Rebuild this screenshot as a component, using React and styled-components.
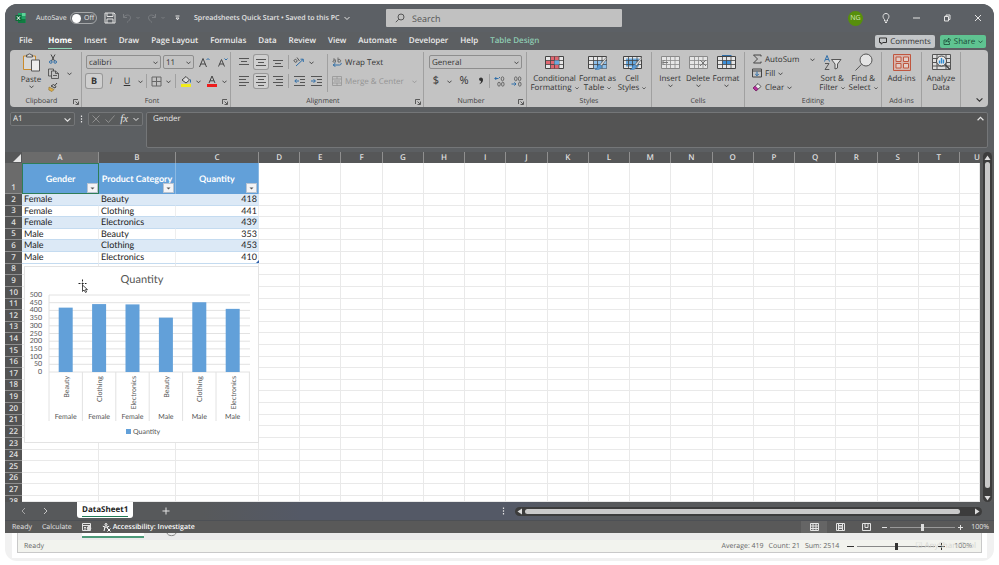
import React, { useState } from 'react'
import styled, { createGlobalStyle, css } from 'styled-components'

const GlobalStyle = createGlobalStyle`
  * { box-sizing: border-box; }
  body {
    margin: 0;
    background: #fff;
    font-family: 'Open Sans', 'Noto Sans', sans-serif;
    font-size: 8px;
    color: #333;
    text-rendering: geometricPrecision;
  }
  button, input, select, textarea {
    font: inherit;
    color: inherit;
    text-rendering: inherit;
    margin: 0;
    padding: 0;
    border: 0;
    background: none;
    outline: none;
  }
  button { white-space: nowrap; }
  svg { display: block; flex: none; }
`

/* ---------- frame ---------- */

const Page = styled.div`
  height: 100vh;
  padding: 4px 5px;
  overflow: hidden;
`

const Backdrop = styled.div`
  height: 100%;
  display: flex;
  flex-direction: column;
  background: #f1f1f1;
  border-radius: 12px;
`

const Window = styled.main`
  flex: 1;
  min-height: 0;
  display: flex;
  flex-direction: column;
  background: #5c5f62;
  border-radius: 12px 12px 0 0;
  overflow: hidden;
  color: #e4e4e4;
`

/* ---------- title bar ---------- */

const TitleBar = styled.header`
  height: 28px;
  flex: none;
  display: flex;
  align-items: center;
  background: #5c6065;
  padding: 0 10px;
`

const TitleLeft = styled.div`
  width: 371px;
  display: flex;
  align-items: center;
`

const AutoSave = styled.label`
  width: 71px;
  display: flex;
  align-items: center;
  justify-content: space-between;
  padding-left: 10px;
  margin-right: 7px;
  font-size: 7px;
`

const Toggle = styled.span`
  width: 27px;
  height: 12px;
  display: flex;
  align-items: center;
  gap: 3px;
  padding-left: 1px;
  border: 1px solid #a5a7a9;
  border-radius: 6px;
  input {
    appearance: none;
    width: 9px;
    height: 9px;
    border-radius: 50%;
    background: #fff;
  }
`

const QuickAccess = styled.div`
  display: flex;
  align-items: center;
  gap: 4px;
  width: 78px;
  margin-right: 12px;
  button:last-child { margin-left: 5px; }
`

const DocTitle = styled.button`
  display: flex;
  align-items: center;
  gap: 5px;
  font-size: 7px;
  font-weight: 600;
`

const SearchBox = styled.label`
  width: 236px;
  height: 18px;
  display: flex;
  align-items: center;
  gap: 7px;
  padding-left: 9px;
  background: #c1c1c1;
  border-radius: 1px;
  color: #555;
  font-size: 9px;
  input { flex: 1; min-width: 0; }
  input::placeholder { color: #555; opacity: 1; }
`

const TitleRight = styled.div`
  margin-left: auto;
  display: flex;
  align-items: center;
  gap: 20px;
  > :first-child { margin-right: -3px; }
`

const Avatar = styled.span`
  width: 15px;
  height: 15px;
  border-radius: 50%;
  background: #578f0c;
  color: #d5e6bd;
  font-size: 7px;
  line-height: 15px;
  text-align: center;
`

/* ---------- ribbon tabs ---------- */

const TabBar = styled.nav`
  height: 18px;
  flex: none;
  display: flex;
  align-items: center;
  padding: 0 8px 0 14px;
  gap: 12px;
  font-size: 8px;
`

const Tab = styled.button`
  height: 15px;
  align-self: flex-end;
  margin-bottom: 1px;
  line-height: 14px;
  border-bottom: 1px solid transparent;
  color: ${p => (p.$accent ? '#8fcdb4' : '#ececec')};
  font-weight: ${p => (p.$active ? 700 : 600)};
  ${p => p.$active && css`
    border-color: #8fd6b6;
    color: #fff;
  `}
  ${p => p.$first && css`margin-right: 4px;`}
`

const TabAction = styled.button`
  height: 13px;
  display: flex;
  align-items: center;
  justify-content: center;
  gap: 3px;
  border-radius: 2px;
  background: ${p => (p.$green ? '#5fc391' : '#c3c6c8')};
  color: ${p => (p.$green ? '#1c4a35' : '#333')};
  width: ${p => (p.$green ? 46 : 60)}px;
`

const TabActions = styled.div`
  margin-left: auto;
  display: flex;
  gap: 5px;
`

/* ---------- ribbon ---------- */

const Ribbon = styled.section`
  height: 57px;
  flex: none;
  display: flex;
  margin: 0 6px 0 5px;
  background: #c3c3c3;
  border-radius: 4px;
  color: #333;
  padding: 2px 0 0;
`

const Group = styled.div`
  width: ${p => p.$w}px;
  flex: none;
  display: flex;
  flex-direction: column;
  border-right: 1px solid #a0a0a0;
`

const GroupBody = styled.div`
  flex: 1;
  min-height: 0;
  display: flex;
  justify-content: ${p => p.$justify || 'flex-start'};
  gap: ${p => p.$gap || 0}px;
  padding: 0 ${p => p.$pad || 0}px;
`

const GroupLabel = styled.div`
  height: 11px;
  line-height: 10px;
  display: flex;
  align-items: center;
  justify-content: center;
  font-size: 7px;
  color: #3f3f3f;
  span { flex: 1; text-align: center; }
  svg { margin-right: 2px; }
`

const Stack = styled.div`
  display: flex;
  flex-direction: column;
  gap: 3px;
  padding-top: 2px;
  flex: none;
`

const Row = styled.div`
  height: 16px;
  display: flex;
  align-items: center;
  gap: ${p => p.$gap || 4}px;
`

const Tool = styled.button`
  min-width: ${p => p.$w || 14}px;
  height: 14px;
  display: flex;
  align-items: center;
  justify-content: center;
  gap: ${p => p.$gap || 4}px;
  border-radius: 2px;
  color: ${p => (p.$dim ? '#949494' : '#333')};
  ${p => p.$on && css`
    background: #cfcfcf;
    box-shadow: 0 0 0 1px #989898;
  `}
`

const Glyph = styled.span`
  font-size: ${p => p.$size || 9}px;
  line-height: 12px;
  font-weight: ${p => (p.$bold ? 700 : 400)};
  font-style: ${p => (p.$italic ? 'italic' : 'normal')};
  text-decoration: ${p => (p.$underline ? 'underline' : 'none')};
`

const Divider = styled.i`
  width: 1px;
  height: 14px;
  background: #a0a0a0;
`

const TallDivider = styled.i`
  width: 1px;
  height: 38px;
  margin-top: 2px;
  background: #a0a0a0;
`

const SelectWrap = styled.div`
  position: relative;
  width: ${p => p.$w}px;
  height: 14px;
  select {
    appearance: none;
    width: 100%;
    height: 14px;
    padding-left: 2px;
    border: 1px solid #8e8e8e;
    border-radius: 2px;
    color: #333;
  }
  svg {
    position: absolute;
    right: 3px;
    top: 5px;
    pointer-events: none;
  }
`

const BigTool = styled.button`
  display: flex;
  flex-direction: column;
  align-items: center;
  width: ${p => p.$w}px;
  padding-top: ${p => (p.$tall ? 1 : 3)}px;
  color: #333;
  line-height: 9px;
  > svg:first-child { margin: 0 0 ${p => (p.$tall ? 3 : 4)}px; }
`

const MenuLine = styled.span`
  height: 9px;
  display: flex;
  align-items: center;
  gap: 3px;
`

const SmallStack = styled.div`
  display: flex;
  flex-direction: column;
  button {
    height: 14px;
    display: flex;
    align-items: center;
    gap: 3px;
    color: #333;
  }
`

const Gap = styled.span`
  width: ${p => p.$w}px;
`

const Collapse = styled.button`
  margin: auto 5px 4px auto;
  color: #333;
`

/* ---------- formula bar ---------- */

const FormulaBar = styled.section`
  height: 45px;
  flex: none;
  display: flex;
  align-items: flex-start;
  padding: 5px 6px 4px 5px;
`

const Box = styled.div`
  height: ${p => (p.$tall ? '36px' : '14px')};
  display: flex;
  align-items: ${p => (p.$tall ? 'flex-start' : 'center')};
  background: ${p => (p.$tall ? '#545454' : '#595b5c')};
  border: 1px solid #747678;
  border-radius: 2px;
  color: #e6e6e6;
`

const NameBox = styled(Box)`
  width: 65px;
  padding: 0 3px 0 2px;
  input {
    flex: 1;
    min-width: 0;
    height: 12px;
    line-height: 12px;
  }
`

const FxBox = styled(Box)`
  width: 55px;
  justify-content: space-around;
  margin-right: 3px;
  em { font: italic 11px/12px 'Liberation Serif', serif; }
`

const Dots = styled.span`
  width: 13px;
  height: 14px;
  display: flex;
  align-items: center;
  justify-content: center;
`

const FormulaBox = styled(Box)`
  flex: 1;
  padding: 0 3px 0 6px;
  textarea {
    flex: 1;
    height: 30px;
    line-height: 12px;
    resize: none;
    overflow: hidden;
  }
  svg { margin-top: 2px; }
`

/* ---------- sheet ---------- */

const SheetArea = styled.section`
  flex: 1;
  min-height: 0;
  display: flex;
`

const SheetView = styled.div`
  position: relative;
  flex: 1;
  min-width: 0;
`

const Grid = styled.table`
  display: grid;
  height: 100%;
  grid-template-columns: 17px 77px 77px 83px repeat(17, minmax(0, 1fr)) 20px;
  grid-template-rows: 11px 31px repeat(26, minmax(0, 1fr)) 6px;
  background: #fff;
  font-family: Lato, sans-serif;
  font-size: 9px;
  color: #222;
  thead, tbody, tr { display: contents; }
`

const ColHead = styled.th`
  padding: 0;
  background: ${p => (p.$active ? '#6b6b6b' : '#565758')};
  border-right: 1px solid #8f8f8f;
  color: #dedede;
  font: 600 8px/11px 'Open Sans', sans-serif;
  text-align: center;
  overflow: hidden;
  &:last-child {
    border: 0;
    text-align: right;
  }
`

const RowHead = styled.th`
  padding: 0;
  display: flex;
  align-items: flex-end;
  justify-content: center;
  overflow: hidden;
  background: ${p => (p.$active ? '#6b6b6b' : '#535353')};
  border-bottom: 1px solid #8f8f8f;
  color: #dedede;
  font: 600 8px/11px 'Open Sans', sans-serif;
  ${p => p.$cut && css`
    align-items: flex-start;
    border: 0;
  `}
`

const Corner = styled.th`
  padding: 0 1px 1px 0;
  display: flex;
  align-items: flex-end;
  justify-content: flex-end;
  background: #565758;
`

const Cell = styled.td`
  padding: 0 2px;
  overflow: hidden;
  white-space: nowrap;
  line-height: 10px;
  text-align: ${p => (p.$num ? 'right' : 'left')};
  border-right: 1px solid #e9e9e9;
  border-bottom: 1px solid #e9e9e9;
  ${p => p.$num && css`padding-right: 1px;`}
  ${p => p.$table && css`
    background: ${p.$band ? '#dce9f6' : '#fff'};
    border-bottom-color: #c4dbf0;
    border-right-color: ${p.$band ? '#dce9f6' : '#eee'};
  `}
`

const HeadCell = styled.td`
  position: relative;
  padding: 0;
  display: flex;
  align-items: center;
  justify-content: center;
  background: #62a0d9;
  color: #fff;
  font-weight: 700;
  white-space: nowrap;
  border-right: 1px solid #8bb9e3;
  ${p => p.$active && css`
    border: 0;
    box-shadow: inset 0 0 0 1px #2e7d57;
  `}
  button {
    position: absolute;
    right: 1px;
    bottom: 1px;
    width: 11px;
    height: 10px;
    display: flex;
    align-items: center;
    justify-content: center;
    background: #f4f4f6;
    border: 1px solid #b9c4d2;
    color: #555;
  }
`

const TableCorner = styled.span`
  position: absolute;
  left: 251px;
  top: 108px;
  color: #2f5fa8;
`

const ChartBox = styled.figure`
  position: absolute;
  left: 19px;
  top: 114px;
  width: 235px;
  height: 177px;
  margin: 0;
  background: #fff;
  border: 1px solid #e3e3e3;
  svg text { font-family: Lato, sans-serif; fill: #555; }
`

const Pointer = styled.span`
  position: absolute;
  left: 73px;
  top: 127px;
`

const VScroll = styled.div`
  width: 14px;
  display: flex;
  flex-direction: column;
  align-items: center;
  margin-left: auto;
  background: #5a5b5c;
`

const VTrack = styled.div`
  width: 9px;
  flex: 1;
  display: flex;
  flex-direction: column;
  align-items: center;
  gap: 2px;
  padding: 3px 0 1px;
  background: #3c3c3c;
  border-radius: 5px;
  i {
    flex: 1;
    width: 5px;
    margin-bottom: 6px;
    background: #c9c9c9;
    border-radius: 3px;
  }
`

/* ---------- bottom bars ---------- */

const SheetTabs = styled.nav`
  height: 18px;
  flex: none;
  display: flex;
  align-items: center;
  padding: 0 12px 0 15px;
  background: linear-gradient(90deg, #57595b 20%, #545966 30%, #545966 52%, #57595b 60%);
`

const Arrows = styled.div`
  width: 57px;
  display: flex;
  gap: 13px;
`

const SheetTab = styled.button`
  height: 16px;
  align-self: flex-start;
  padding: 0 5px 1px;
  background: #fff;
  border-radius: 0 0 3px 3px;
  color: #222;
  font-size: 8px;
  font-weight: 700;
  line-height: 13px;
  span {
    display: block;
    height: 14px;
    border-bottom: 1px solid #217a56;
  }
`

const AddSheet = styled.button`
  margin-left: 29px;
`

const HScroll = styled.div`
  width: 467px;
  height: 9px;
  margin-left: 10px;
  display: flex;
  align-items: center;
  gap: 3px;
  padding: 0 2px;
  background: #3c3c3c;
  border-radius: 5px;
  i {
    flex: 1;
    height: 5px;
    margin-right: 12px;
    background: #c9c9c9;
    border-radius: 3px;
  }
`

const Handle = styled.span`
  margin-left: auto;
`

const StatusBar = styled.footer`
  height: 13px;
  flex: none;
  display: flex;
  align-items: center;
  gap: 10px;
  padding: 0 5px 0 7px;
  background: #595959;
  border-top: 1px solid #4d5055;
  font-size: 7px;
`

const Accessibility = styled.button`
  display: flex;
  align-items: center;
  gap: 2px;
  font-weight: 600;
  color: #fff;
`

const StatusRight = styled.div`
  margin-left: auto;
  display: flex;
  align-items: center;
  gap: 8px;
`

const StatusViews = styled.div`
  display: flex;
  align-items: center;
  margin-right: -5px;
  button {
    width: 26px;
    height: 12px;
    display: flex;
    align-items: center;
    justify-content: center;
  }
  button:first-child { background: #656565; }
`

const ZoomGroup = styled.div`
  display: flex;
  align-items: center;
  gap: 3px;
`

const Slider = styled.input`
  appearance: none;
  width: ${p => (p.$light ? 78 : 65)}px;
  height: 8px;
  background: linear-gradient(${p => (p.$light ? '#888, #888' : '#999, #999')}) center / 100% 1px no-repeat;
  &::-webkit-slider-thumb {
    appearance: none;
    width: 3px;
    height: 7px;
    background: ${p => (p.$light ? '#333' : '#ddd')};
  }
`

/* ---------- window underneath ---------- */

const Under = styled.section`
  height: 20px;
  flex: none;
  margin: 0 12px 8px;
  background: #ebebeb;
  border: 1px solid #c9c9c9;
  border-top: 0;
  outline: 5px solid #fff;
  clip-path: inset(0 -5px -5px -5px);
`

const UnderTabs = styled.div`
  height: 7px;
  display: flex;
  align-items: flex-start;
  padding-left: 64px;
  i {
    width: 62px;
    height: 5px;
    background: #fff;
    border-bottom: 2px solid #4d9a7a;
  }
  svg { margin-left: 22px; }
`

const UnderStatus = styled.div`
  position: relative;
  height: 12px;
  display: flex;
  align-items: center;
  padding: 0 9px 0 6px;
  background: #f2f3ee;
  color: #666;
  font-size: 7px;
`

const Sums = styled.div`
  margin-left: auto;
  display: flex;
  gap: 5px;
  margin-right: 8px;
`

const Watermark = styled.span`
  position: absolute;
  right: 5px;
  top: 1px;
  line-height: 10px;
  font-size: 8px;
  color: #d6d7d3;
`

/* ---------- icons ---------- */

const Chevron = ({ size = 5, up }) => (
  <svg width={size} height={size} viewBox="0 0 6 6" fill="none" stroke="currentColor" strokeWidth="1">
    <path d={up ? 'M0.5 4.5L3 2L5.5 4.5' : 'M0.5 2L3 4.5L5.5 2'} />
  </svg>
)

const Icon = ({ w = 12, h = w, vw = w, vh = h, children }) => (
  <svg width={w} height={h} viewBox={`0 0 ${vw} ${vh}`} fill="none" stroke="currentColor" strokeWidth="1">
    {children}
  </svg>
)

const Launcher = () => (
  <Icon w={6}><path d="M0.5 5V0.5H5M2.5 2.5L5 5M5.5 2.5V5.5H2.5" strokeWidth="0.8" /></Icon>
)

const AlignIcon = ({ lines }) => (
  <Icon w={10}>
    {lines.map(([x1, x2, y]) => <path key={y} d={`M${x1} ${y}H${x2}`} stroke="#555" />)}
  </Icon>
)

const TableIcon = ({ w = 19, h = 15, fill, stroke = '#444', children }) => (
  <Icon w={w} h={h} vw={19} vh={15}>
    <path d="M0.5 1.5H18.5V13.5H0.5Z" fill="#e6e6e6" stroke={stroke} />
    {fill}
    <path d="M0.5 5.5H18.5M0.5 9.5H18.5M5.5 1.5V13.5M9.5 1.5V13.5M14 1.5V13.5" stroke={stroke} strokeWidth="0.8" />
    {children}
  </Icon>
)

const Brush = () => (
  <g>
    <path d="M18.5 2L12 9.5L13.5 11L18.8 4Z" fill="#d9d9d9" stroke="#555" strokeWidth="0.6" />
    <path d="M12 9.5C10 9.5 9.5 11 9 13.2C8.5 14.3 7.5 14.5 7 14.5C10 15.2 13.5 14 13.5 11Z" fill="#5b9bd5" stroke="#2f6ea8" strokeWidth="0.5" />
  </g>
)

const DotsIcon = () => (
  <Icon w={3} h={8}>
    <path d="M1.5 0.5V2M1.5 3.2V4.7M1.5 6V7.5" strokeWidth="1.2" />
  </Icon>
)

const MenuWord = ({ children }) => <MenuLine>{children}<Chevron size={4} /></MenuLine>

/* ---------- data ---------- */

const tabs = ['File', 'Home', 'Insert', 'Draw', 'Page Layout', 'Formulas', 'Data', 'Review', 'View', 'Automate', 'Developer', 'Help', 'Table Design']
const columns = 'ABCDEFGHIJKLMNOPQRSTU'.split('')
const headers = ['Gender', 'Product Category', 'Quantity']
const records = [
  ['Female', 'Beauty', 418],
  ['Female', 'Clothing', 441],
  ['Female', 'Electronics', 439],
  ['Male', 'Beauty', 353],
  ['Male', 'Clothing', 453],
  ['Male', 'Electronics', 410],
]
const rowNumbers = Array.from({ length: 27 }, (_, i) => i + 2)

/* ---------- sections ---------- */

function Title() {
  return (
    <TitleBar>
      <TitleLeft>
        <Icon w={11} h={12}>
          <path d="M3 1H10.5V11H3Z" fill="#21a366" stroke="none" />
          <path d="M7 1H10.5V4H7Z" fill="#5fd39a" stroke="none" />
          <path d="M3 7H10.5V11H3Z" fill="#107c41" stroke="none" />
          <path d="M0.5 3H6.5V9H0.5Z" fill="#0d6a38" stroke="none" />
          <path d="M2 4.3L5 7.8M5 4.3L2 7.8" stroke="#fff" />
        </Icon>
        <AutoSave>
          AutoSave
          <Toggle><input type="checkbox" aria-label="AutoSave" />Off</Toggle>
        </AutoSave>
        <QuickAccess>
          <button aria-label="Save">
            <Icon w={12}><path d="M1 1H10L11 2V11H1ZM3 1V4.5H9V1M3 11V7H9V11" /></Icon>
          </button>
          <Tool $w={21} aria-label="Undo">
            <Icon w={10}><path d="M1.5 1V4.5H5M1.5 4.5C3 1.5 8 1 8.5 4.5C8.7 6.5 6.5 8 5 9.5" stroke="#7b7e82" /></Icon>
            <Icon w={4}><path d="M0.5 1L2 2.5L3.5 1" stroke="#7b7e82" /></Icon>
          </Tool>
          <Tool $w={21} aria-label="Redo">
            <Icon w={10}><path d="M8.5 1V4.5H5M8.5 4.5C7 1.5 2 1 1.5 4.5C1.3 6.5 3.5 8 5 9.5" stroke="#7b7e82" /></Icon>
            <Icon w={4}><path d="M0.5 1L2 2.5L3.5 1" stroke="#7b7e82" /></Icon>
          </Tool>
          <button aria-label="Customize toolbar">
            <Icon w={5} h={6}><path d="M0.5 1H4.5M1 3H4L2.5 4.8Z" /></Icon>
          </button>
        </QuickAccess>
        <DocTitle>Spreadsheets Quick Start • Saved to this PC <Chevron size={6} /></DocTitle>
      </TitleLeft>
      <SearchBox>
        <Icon w={10}><circle cx="6" cy="4" r="3" /><path d="M3.8 6.2L0.8 9.2" /></Icon>
        <input type="text" placeholder="Search" aria-label="Search" />
      </SearchBox>
      <TitleRight>
        <Avatar>NG</Avatar>
        <button aria-label="Tips">
          <Icon w={12}><path d="M4.5 7.5C2 5 3 1.5 6 1.5C9 1.5 10 5 7.5 7.5V9H4.5ZM5 10.5H7" /></Icon>
        </button>
        <button aria-label="Minimize"><Icon w={10}><path d="M1 5H8" /></Icon></button>
        <button aria-label="Restore">
          <Icon w={10}><path d="M2.5 3.5H6.5V8H2.5ZM4 3.5V2H8V6.5H6.5" /></Icon>
        </button>
        <button aria-label="Close"><Icon w={12}><path d="M3 3L9 9M9 3L3 9" /></Icon></button>
      </TitleRight>
    </TitleBar>
  )
}

function RibbonTabs() {
  const [active, setActive] = useState('Home')
  return (
    <TabBar>
      {tabs.map((name, i) => (
        <Tab key={name} $first={i === 0} $active={name === active} $accent={name === 'Table Design'} onClick={() => setActive(name)}>
          {name}
        </Tab>
      ))}
      <TabActions>
        <TabAction>
          <Icon w={8}><path d="M0.5 1H7.5V5.5H4L2 7.2V5.5H0.5Z" /></Icon>
          Comments
        </TabAction>
        <TabAction $green>
          <Icon w={8}><path d="M3 3H1V7.5H6.5V5.5M2.8 5.2C3 3.5 4 2.7 5.5 2.7V1L7.7 3.2L5.5 5.2V4C4.2 4 3.5 4.2 2.8 5.2Z" strokeWidth="0.8" /></Icon>
          Share
          <Chevron />
        </TabAction>
      </TabActions>
    </TabBar>
  )
}

function ClipboardGroup() {
  return (
    <Group $w={72}>
      <GroupBody $pad={8} $gap={4}>
        <BigTool $w={26} $tall>
          <Icon w={19} h={19}>
            <path d="M1.5 3H13.5V16.5H1.5Z" fill="#d8d8d8" stroke="#c98a2c" />
            <path d="M4.5 4V2H6C6 0.5 9 0.5 9 2H10.5V4Z" fill="#ddd" stroke="#555" />
            <path d="M9.5 7H17.5V18H9.5Z" fill="#ececec" stroke="#555" />
          </Icon>
          Paste
          <Chevron />
        </BigTool>
        <SmallStack>
          <button aria-label="Cut">
            <Icon w={10}><path d="M3 0.5L6.5 7M7 0.5L3.5 7" stroke="#444" /><circle cx="2.8" cy="8" r="1.3" stroke="#2f6ea8" /><circle cx="7.2" cy="8" r="1.3" stroke="#2f6ea8" /></Icon>
          </button>
          <button aria-label="Copy">
            <Icon w={11}><path d="M3.5 8H0.5V1H5.5V3M3.5 3H7.5L10.5 5.5V10.5H3.5ZM7.5 3V5.5H10.5M5 7.5H9" stroke="#444" strokeWidth="0.8" /></Icon>
            <Gap $w={2} />
            <Chevron />
          </button>
          <button aria-label="Format Painter">
            <Icon w={10}><path d="M1 5L6 7.5L4 9.5L0.8 8Z" fill="#e0b04a" stroke="#8a6d2a" strokeWidth="0.6" /><path d="M3 4L7 6L8 4.5L5.5 2.5ZM6.8 3.5L9 1" stroke="#444" /></Icon>
          </button>
        </SmallStack>
      </GroupBody>
      <GroupLabel><span>Clipboard</span><Launcher /></GroupLabel>
    </Group>
  )
}

function FontGroup() {
  return (
    <Group $w={149}>
      <GroupBody $pad={4}>
        <Stack>
          <Row $gap={2}>
            <SelectWrap $w={75}>
              <select aria-label="Font"><option>calibri</option></select>
              <Chevron />
            </SelectWrap>
            <SelectWrap $w={31}>
              <select aria-label="Font size"><option>11</option></select>
              <Chevron />
            </SelectWrap>
            <Tool $w={17} aria-label="Increase font size">
              <Icon w={11}><path d="M0.5 10L4 1.5L7.5 10M1.8 7H6.2" stroke="#444" /><path d="M7.5 3L9 1.5L10.5 3" stroke="#2f6ea8" /></Icon>
            </Tool>
            <Tool $w={16} aria-label="Decrease font size">
              <Icon w={10}><path d="M0.5 9.5L3.5 2.5L6.5 9.5M1.5 7H5.5" stroke="#444" /><path d="M6.5 1.5L8 3L9.5 1.5" stroke="#2f6ea8" /></Icon>
            </Tool>
          </Row>
          <Row $gap={2}>
            <Tool $on $w={16}><Glyph $bold>B</Glyph></Tool>
            <Tool><Glyph $italic>I</Glyph></Tool>
            <Tool><Glyph $underline>U</Glyph></Tool>
            <Tool $w={8} aria-label="Underline options"><Chevron /></Tool>
            <Divider />
            <Tool $w={24} aria-label="Borders">
              <Icon w={11}><path d="M1 1H10V10H1ZM5.5 1V10M1 5.5H10" stroke="#666" /></Icon>
              <Chevron />
            </Tool>
            <Divider />
            <Tool $w={24} aria-label="Fill color">
              <Icon w={12}><path d="M2 5L6 1.5L9.5 5L6 8Z" stroke="#444" fill="#ddd" /><path d="M10.5 4.5V7.5" stroke="#2f6ea8" /><path d="M1 10.5H11" stroke="#f3ec1a" strokeWidth="3" /></Icon>
              <Chevron />
            </Tool>
            <Tool $w={24} aria-label="Font color">
              <Icon w={12}><path d="M3 8L6 1L9 8M4 5.8H8" stroke="#444" /><path d="M1 10.5H11" stroke="#ee1c1c" strokeWidth="3" /></Icon>
              <Chevron />
            </Tool>
          </Row>
        </Stack>
      </GroupBody>
      <GroupLabel><span>Font</span><Launcher /></GroupLabel>
    </Group>
  )
}

function AlignmentGroup() {
  return (
    <Group $w={193}>
      <GroupBody $pad={6} $gap={4}>
        <Stack>
          <Row $gap={3}>
            <Tool><AlignIcon lines={[[0, 10, 1.5], [2, 8, 4.5], [0, 10, 7.5]]} /></Tool>
            <Tool $on><AlignIcon lines={[[0, 10, 2.5], [2, 8, 5.5], [0, 10, 8.5]]} /></Tool>
            <Tool><AlignIcon lines={[[0, 10, 3.5], [2, 8, 6.5], [0, 10, 9.5]]} /></Tool>
            <Divider />
            <Tool $w={22} aria-label="Orientation">
              <Icon w={12}><path d="M1 4.5C2 2.5 4 3.5 4 5S1.5 7 1 4.5M4 1.5L6.5 5" stroke="#555" /><path d="M3 10L10 3.5M7.5 3.2H10.3V6" stroke="#2f6ea8" /></Icon>
              <Chevron />
            </Tool>
          </Row>
          <Row $gap={3}>
            <Tool><AlignIcon lines={[[0, 10, 0.5], [0, 7, 3.5], [0, 10, 6.5], [0, 7, 9.5]]} /></Tool>
            <Tool $on><AlignIcon lines={[[0, 10, 0.5], [2, 8, 3.5], [0, 10, 6.5], [2, 8, 9.5]]} /></Tool>
            <Tool><AlignIcon lines={[[0, 10, 0.5], [3, 10, 3.5], [0, 10, 6.5], [3, 10, 9.5]]} /></Tool>
            <Divider />
            <Tool aria-label="Decrease indent">
              <Icon w={11} h={10}><path d="M0 0.5H11M6 3.5H11M6 6.5H11M0 9.5H11" stroke="#555" /><path d="M5 5H1M2.5 3.2L0.8 5L2.5 6.8" stroke="#2f6ea8" /></Icon>
            </Tool>
            <Tool aria-label="Increase indent">
              <Icon w={11} h={10}><path d="M0 0.5H11M6 3.5H11M6 6.5H11M0 9.5H11" stroke="#555" /><path d="M0 5H4.2M2.6 3.2L4.4 5L2.6 6.8" stroke="#2f6ea8" /></Icon>
            </Tool>
          </Row>
        </Stack>
        <TallDivider />
        <Stack>
          <Row>
            <Tool $gap={3}>
              <Icon w={10}><path d="M1 2.5C2.5 1 3.5 2.5 3.5 5C2 5.5 0.5 5 1 4C1.5 3 3.5 3.2 3.5 3.2M6 0.5V5C8 5.5 9 4.5 8.5 3.2C8 2 6.5 2.3 6 3" stroke="#555" strokeWidth="0.8" /><path d="M1 8H7.5C9.5 8 9.5 5.8 8.8 5.8M3.5 6L1.2 8L3.5 9.8" stroke="#2f6ea8" /></Icon>
              Wrap Text
            </Tool>
          </Row>
          <Row>
            <Tool $dim $gap={3}>
              <Icon w={10}><path d="M0.5 0.5H9.5V9.5H0.5ZM0.5 3H9.5M0.5 7H9.5M5 0.5V3M5 7V9.5M2 5H8" strokeWidth="0.8" /></Icon>
              Merge &amp; Center
              <Gap $w={2} />
              <Chevron />
            </Tool>
          </Row>
        </Stack>
      </GroupBody>
      <GroupLabel><span>Alignment</span><Launcher /></GroupLabel>
    </Group>
  )
}

function NumberGroup() {
  return (
    <Group $w={103}>
      <GroupBody $pad={5}>
        <Stack>
          <Row>
            <SelectWrap $w={93}>
              <select aria-label="Number format"><option>General</option></select>
              <Chevron />
            </SelectWrap>
          </Row>
          <Row $gap={1}>
            <Tool><Glyph $size={11}>$</Glyph></Tool>
            <Tool $w={10} aria-label="Currency options"><Chevron /></Tool>
            <Tool $w={18}><Glyph $size={11}>%</Glyph></Tool>
            <Tool $w={14} aria-label="Comma style">
              <Icon w={6} h={8}><path d="M3 0.5C0.5 0.5 0.5 4 3 4C3 5.5 2.3 6.3 1.2 7.2C4 6.5 5.2 4.5 5 2.5C4.9 1.2 4 0.5 3 0.5Z" fill="#333" stroke="none" /></Icon>
            </Tool>
            <Divider />
            <Tool $w={16} aria-label="Increase decimal">
              <Icon w={11}><path d="M6 1.5H5M1 2.5H4.5M2.3 1L0.8 2.5L2.3 4" stroke="#2f6ea8" /><ellipse cx="8.5" cy="2.8" rx="1.3" ry="2" stroke="#555" strokeWidth="0.8" /><ellipse cx="5" cy="8.2" rx="1.3" ry="2" stroke="#555" strokeWidth="0.8" /><ellipse cx="8.8" cy="8.2" rx="1.3" ry="2" stroke="#555" strokeWidth="0.8" /></Icon>
            </Tool>
            <Tool $w={16} aria-label="Decrease decimal">
              <Icon w={11}><ellipse cx="4.8" cy="2.8" rx="1.3" ry="2" stroke="#555" strokeWidth="0.8" /><ellipse cx="8.6" cy="2.8" rx="1.3" ry="2" stroke="#555" strokeWidth="0.8" /><ellipse cx="8.8" cy="8.2" rx="1.3" ry="2" stroke="#555" strokeWidth="0.8" /><path d="M0.5 8H5M3.4 6.4L5 8L3.4 9.6" stroke="#2f6ea8" /></Icon>
            </Tool>
          </Row>
        </Stack>
      </GroupBody>
      <GroupLabel><span>Number</span><Launcher /></GroupLabel>
    </Group>
  )
}

function RestGroups() {
  return (
    <>
      <Group $w={125}>
        <GroupBody $pad={4} $gap={1}>
          <BigTool $w={47}>
            <TableIcon fill={<path d="M5.5 1.5H14V5.5H5.5ZM1 5.5H9.5V9.5H1ZM5.5 9.5H14V13.5H5.5Z" fill="#e06670" stroke="none" />}>
              <path d="M9.5 5.5H14V9.5H9.5Z" fill="#6aa9de" stroke="none" />
            </TableIcon>
            Conditional
            <MenuWord>Formatting</MenuWord>
          </BigTool>
          <BigTool $w={37}>
            <TableIcon fill={<path d="M5.5 5.5H18.5V13.5H5.5Z" fill="#8fc0ea" stroke="none" />}><Brush /></TableIcon>
            Format as
            <MenuWord>Table</MenuWord>
          </BigTool>
          <BigTool $w={30}>
            <TableIcon fill={<path d="M3 3.5H16V11.5H3Z" fill="#6aa9de" stroke="none" />}><Brush /></TableIcon>
            Cell
            <MenuWord>Styles</MenuWord>
          </BigTool>
        </GroupBody>
        <GroupLabel><span>Styles</span></GroupLabel>
      </Group>
      <Group $w={93}>
        <GroupBody $pad={4}>
          <BigTool $w={28}>
            <TableIcon stroke="#8a8a8a"><path d="M7 7.5H1.5M3.5 5L1 7.5L3.5 10" stroke="#777" /></TableIcon>
            Insert
            <Chevron />
          </BigTool>
          <BigTool $w={28}>
            <TableIcon stroke="#8a8a8a"><path d="M11 5L17 11M17 5L11 11" stroke="#777" /></TableIcon>
            Delete
            <Chevron />
          </BigTool>
          <BigTool $w={28}>
            <TableIcon fill={<path d="M5.5 5.5H14V9.5H5.5Z" fill="#3d8fd8" stroke="none" />}><path d="M5 0.5H14.5" stroke="#2f6ea8" /></TableIcon>
            Format
            <Chevron />
          </BigTool>
        </GroupBody>
        <GroupLabel><span>Cells</span></GroupLabel>
      </Group>
      <Group $w={137}>
        <GroupBody $pad={7} $gap={4}>
          <SmallStack>
            <button>
              <Icon w={10}><path d="M9 2.5V1H1.5L5.5 5L1.5 9H9V7.5" stroke="#444" /></Icon>
              AutoSum
              <Gap $w={5} />
              <Chevron />
            </button>
            <button>
              <Icon w={10}><path d="M0.5 1H9.5V9H0.5ZM0.5 3H9.5" stroke="#444" /><path d="M5 3.5V7.5M3.2 6L5 7.8L6.8 6" stroke="#2f6ea8" /></Icon>
              Fill
              <Chevron />
            </button>
            <button>
              <Icon w={10}><path d="M1 6L6 1.5L9 4.5L4 9Z" fill="#eee" stroke="#555" /><path d="M1 6L3.2 4L6.2 7L4 9Z" fill="#b5309c" stroke="#7d1f6c" strokeWidth="0.6" /></Icon>
              Clear
              <Chevron />
            </button>
          </SmallStack>
          <BigTool $w={28}>
            <Icon w={19} h={15}>
              <path d="M1.5 6.5L4 0.5L6.5 6.5M2.3 4.5H5.7" stroke="#2f6ea8" />
              <path d="M2 8.5H6L2 14.5H6.3" stroke="#555" />
              <path d="M8.5 4.5H18L14.5 9V13L12 14V9Z" fill="#e4e4e4" stroke="#555" />
            </Icon>
            Sort &amp;
            <MenuWord>Filter</MenuWord>
          </BigTool>
          <BigTool $w={28} $tall>
            <Icon w={19} h={18}>
              <circle cx="12" cy="7" r="6" fill="#e4e4e4" stroke="#555" />
              <path d="M7.5 11.3L1.5 17.5" stroke="#555" />
            </Icon>
            Find &amp;
            <MenuWord>Select</MenuWord>
          </BigTool>
        </GroupBody>
        <GroupLabel><span>Editing</span></GroupLabel>
      </Group>
      <Group $w={40}>
        <GroupBody $justify="center">
          <BigTool $w={36} $tall>
            <Icon w={18} h={18}>
              <path d="M0.5 1.5H17.5V17.5H0.5Z" stroke="#c0563f" fill="#d8b5ac" />
              <path d="M3 4H8V8.5H3ZM10.5 4H15.5V8.5H10.5ZM3 10.5H8V15H3ZM10.5 10.5H15.5V15H10.5Z" fill="#e3cfc9" stroke="#c0563f" />
            </Icon>
            Add-ins
          </BigTool>
        </GroupBody>
        <GroupLabel><span>Add-ins</span></GroupLabel>
      </Group>
      <Group $w={39}>
        <GroupBody $justify="center">
          <BigTool $w={36} $tall>
            <Icon w={19} h={18}>
              <path d="M0.5 1.5H18.5V16.5H0.5ZM0.5 5.5H18.5M0.5 9.5H18.5M0.5 13H18.5M5 1.5V16.5M14 1.5V16.5" stroke="#555" fill="#ddd" />
              <circle cx="9.5" cy="8" r="5" fill="#e9e9e9" stroke="#444" />
              <path d="M13 11.5L18 16.5" stroke="#444" strokeWidth="1.5" />
              <path d="M7.5 10.5V7.5M9.5 10.5V5M11.5 10.5V6.5" stroke="#2f8ad0" strokeWidth="1.4" />
            </Icon>
            Analyze<br />Data
          </BigTool>
        </GroupBody>
      </Group>
      <Collapse aria-label="Collapse ribbon"><Chevron size={7} /></Collapse>
    </>
  )
}

function Formula() {
  return (
    <FormulaBar>
      <NameBox>
        <input type="text" defaultValue="A1" aria-label="Name box" />
        <Chevron size={7} />
      </NameBox>
      <Dots><DotsIcon /></Dots>
      <FxBox>
        <Icon w={8}><path d="M0.5 0.5L7.5 7.5M7.5 0.5L0.5 7.5" stroke="#8e8e8e" /></Icon>
        <Icon w={10} h={8}><path d="M0.5 4.5L3.5 7.5L9.5 0.5" stroke="#8e8e8e" /></Icon>
        <em>fx</em>
        <Chevron size={6} />
      </FxBox>
      <FormulaBox $tall>
        <textarea defaultValue="Gender" aria-label="Formula" />
        <Chevron size={7} up />
      </FormulaBox>
    </FormulaBar>
  )
}

function Chart() {
  const left = 24
  const step = 33.4
  const base = 105
  const scale = 77 / 500
  return (
    <ChartBox>
      <svg width="233" height="175" viewBox="0 0 233 175">
        <text x="117" y="16" textAnchor="middle" fontSize="11">Quantity</text>
        {Array.from({ length: 11 }, (_, i) => i * 50).map(v => (
          <g key={v}>
            <path d={`M${left} ${base - v * scale}H225`} stroke="#e2e2e2" />
            <text x="17" y={base - v * scale + 2} textAnchor="end" fontSize="7">{v}</text>
          </g>
        ))}
        {records.map(([gender, product, qty], i) => {
          const cx = left + step * (i + 0.5)
          return (
            <g key={i}>
              <rect x={cx - 7} y={base - qty * scale} width="14" height={qty * scale} fill="#62a0d9" />
              <path d={`M${left + step * i} ${base}V154`} stroke="#e2e2e2" />
              <text transform={`translate(${cx + 3} 109) rotate(-90)`} textAnchor="end" fontSize="7">{product}</text>
              <text x={cx} y="152" textAnchor="middle" fontSize="7">{gender}</text>
            </g>
          )
        })}
        <path d={`M${left + step * 6} ${base}V154`} stroke="#e2e2e2" />
        <path d={`M${left} 28V105`} stroke="#e2e2e2" />
        <rect x="101" y="162" width="5" height="5" fill="#62a0d9" />
        <text x="108" y="167" fontSize="7">Quantity</text>
      </svg>
    </ChartBox>
  )
}

function Sheet() {
  return (
    <SheetArea>
      <SheetView>
        <Grid>
          <thead>
            <tr>
              <Corner><Icon w={8} h={8}><path d="M8 0V8H0Z" fill="#e6e6e6" stroke="none" /></Icon></Corner>
              {columns.map(c => <ColHead key={c} $active={c === 'A'}>{c}</ColHead>)}
            </tr>
          </thead>
          <tbody>
            <tr>
              <RowHead $active>1</RowHead>
              {headers.map((h, i) => (
                <HeadCell key={h} $active={i === 0}>
                  {h}
                  <button aria-label={`Filter ${h}`}>
                    <Icon w={5} h={3}><path d="M0.5 0.5H4.5L2.5 2.5Z" fill="currentColor" stroke="none" /></Icon>
                  </button>
                </HeadCell>
              ))}
              {columns.slice(3).map(c => <Cell key={c} />)}
            </tr>
            {rowNumbers.map((n, r) => (
              <tr key={n}>
                <RowHead $cut={n === 28}>{n}</RowHead>
                {columns.map((c, i) => (
                  <Cell key={c} $num={i === 2} $table={r < 6 && i < 3} $band={r % 2 === 0}>
                    {records[r]?.[i]}
                  </Cell>
                ))}
              </tr>
            ))}
          </tbody>
        </Grid>
        <TableCorner><Icon w={3}><path d="M3 0V3H0Z" fill="currentColor" stroke="none" /></Icon></TableCorner>
        <Chart />
        <Pointer>
          <Icon w={10} h={14}>
            <path d="M4.5 0.5V7.5M0.5 4.5H8.5" stroke="#222" strokeDasharray="2 1.2" />
            <path d="M4.5 6V12.5L6 11L7.5 13.5L8.6 13L7.4 10.6H9.5Z" fill="#fff" stroke="#222" strokeWidth="0.8" />
          </Icon>
        </Pointer>
      </SheetView>
      <VScroll>
        <VTrack>
          <Icon w={7} h={5}><path d="M3.5 0.5L6.5 5H0.5Z" fill="#ddd" stroke="none" /></Icon>
          <i />
          <Icon w={7} h={5}><path d="M3.5 4.5L6.5 0H0.5Z" fill="#ddd" stroke="none" /></Icon>
        </VTrack>
      </VScroll>
    </SheetArea>
  )
}

function Bottom() {
  const [zoom, setZoom] = useState(50)
  return (
    <>
      <SheetTabs>
        <Arrows>
          <button aria-label="Previous sheet"><Icon w={8}><path d="M5 1L2 4L5 7" stroke="#a5a5a5" /></Icon></button>
          <button aria-label="Next sheet"><Icon w={8}><path d="M3 1L6 4L3 7" stroke="#c5c5c5" /></Icon></button>
        </Arrows>
        <SheetTab><span>DataSheet1</span></SheetTab>
        <AddSheet aria-label="New sheet"><Icon w={8}><path d="M4 0.5V7.5M0.5 4H7.5" /></Icon></AddSheet>
        <Handle><DotsIcon /></Handle>
        <HScroll>
          <Icon w={5} h={7}><path d="M0.5 3.5L5 0.5V6.5Z" fill="#ddd" stroke="none" /></Icon>
          <i />
          <Icon w={5} h={7}><path d="M4.5 3.5L0 0.5V6.5Z" fill="#ddd" stroke="none" /></Icon>
        </HScroll>
      </SheetTabs>
      <StatusBar>
        <span>Ready</span>
        <span>Calculate</span>
        <Icon w={10} h={8}><path d="M0.5 0.5H8.5V7.5H0.5ZM0.5 2.5H8.5M2 4.5H4M2 6H4" /><circle cx="7" cy="5.2" r="1.8" fill="#ddd" /></Icon>
        <Accessibility>
          <Icon w={9}><circle cx="4" cy="1.5" r="1" /><path d="M0.8 3.2L3 4L2 8M7.2 3.2L5 4L6 6M3 4H5M5.5 5.5L8.5 8.5M8.5 5.5L5.5 8.5" /></Icon>
          Accessibility: Investigate
        </Accessibility>
        <StatusRight>
          <StatusViews>
            <button aria-label="Normal view"><Icon w={9} h={8}><path d="M0.5 0.5H8.5V7.5H0.5ZM3 0.5V7.5M6 0.5V7.5M0.5 3H8.5M0.5 5.5H8.5" /></Icon></button>
            <button aria-label="Page layout view"><Icon w={9} h={8}><path d="M0.5 0.5H8.5V7.5H0.5ZM2.5 0.5V7.5M6.5 0.5V7.5M3 2.5H6M3 4H6M3 5.5H6" /></Icon></button>
            <button aria-label="Page break view"><Icon w={9} h={8}><path d="M0.5 0.5H8.5V7.5H0.5ZM3 0.5V4.5H6V0.5" /></Icon></button>
          </StatusViews>
          <ZoomGroup>
            <Icon w={5}><path d="M0 2.5H5" /></Icon>
            <Slider type="range" value={zoom} onChange={ev => setZoom(ev.target.value)} aria-label="Zoom" />
            <Icon w={5}><path d="M0 2.5H5M2.5 0V5" /></Icon>
          </ZoomGroup>
          <span>100%</span>
        </StatusRight>
      </StatusBar>
    </>
  )
}

export default function App() {
  return (
    <>
      <GlobalStyle />
      <Page>
        <Backdrop>
          <Window>
            <Title />
            <RibbonTabs />
            <Ribbon>
              <ClipboardGroup />
              <FontGroup />
              <AlignmentGroup />
              <NumberGroup />
              <RestGroups />
            </Ribbon>
            <Formula />
            <Sheet />
            <Bottom />
          </Window>
          <Under>
            <UnderTabs>
              <i />
              <Icon w={11} h={4}><path d="M1 0C2 3.5 9 3.5 10 0" stroke="#888" /></Icon>
            </UnderTabs>
            <UnderStatus>
              <Watermark>☑ AnyShareTool</Watermark>
              <span>Ready</span>
              <Sums><span>Average: 419</span><span>Count: 21</span><span>Sum: 2514</span></Sums>
              <ZoomGroup>
                <Icon w={7}><path d="M0 3.5H7" stroke="#333" /></Icon>
                <Slider type="range" defaultValue={50} $light aria-label="Zoom level" />
                <Icon w={7}><path d="M0 3.5H7M3.5 0V7" stroke="#333" /></Icon>
              </ZoomGroup>
              <Gap $w={9} />
              <span>100%</span>
            </UnderStatus>
          </Under>
        </Backdrop>
      </Page>
    </>
  )
}
